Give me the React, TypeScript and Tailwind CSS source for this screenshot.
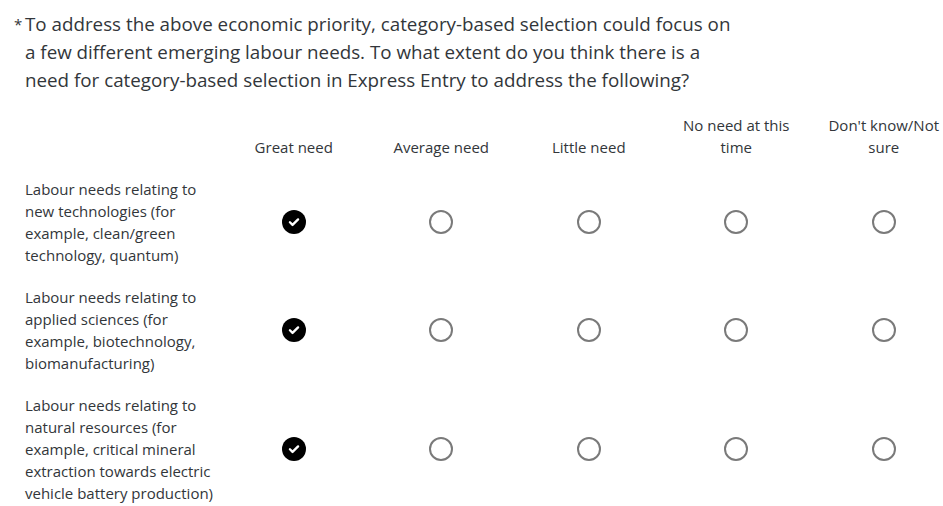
const COLUMNS = ['Great need', 'Average need', 'Little need', 'No need at this time', "Don't know/Not sure"]

const ROWS: { label: string; selected: number }[] = [
  { label: 'Labour needs relating to new technologies (for example, clean/green technology, quantum)', selected: 0 },
  { label: 'Labour needs relating to applied sciences (for example, biotechnology, biomanufacturing)', selected: 0 },
  { label: 'Labour needs relating to natural resources (for example, critical mineral extraction towards electric vehicle battery production)', selected: 0 },
]

function Radio({ checked }: { checked: boolean }) {
  if (checked) {
    return (
      <span className="w-6 h-6 rounded-full bg-black flex items-center justify-center">
        <svg viewBox="0 0 24 24" className="w-3.5 h-3.5" fill="none" stroke="white" strokeWidth={4} strokeLinecap="round" strokeLinejoin="round">
          <path d="M5 12.5l4.5 4.5L19 7.5" />
        </svg>
      </span>
    )
  }
  return <span className="w-6 h-6 rounded-full border-2 border-[#7a7a7a] bg-white" />
}

export default function App() {
  return (
    <div className="w-[943px] h-[506px] overflow-hidden bg-white text-[#32363a] font-['Open_Sans','Noto_Sans',sans-serif]">
      <div className="pt-[10px] pl-[14px] pr-4 flex">
        <span className="w-[11px] shrink-0 text-[15px] leading-[28px]">*</span>
        <p className="text-[18.8px] leading-[28px] w-[712px]">
          To address the above economic priority, category-based selection could focus on a few different emerging labour needs. To what extent do you think there is a need for category-based selection in Express Entry to address the following?
        </p>
      </div>

      <div className="w-[960px] mt-[20px] grid grid-cols-[220px_repeat(5,147.5px)] text-[15px] leading-[22px]">
        <div />
        {COLUMNS.map(c => (
          <div key={c} className="px-3 pb-[10px] flex items-end justify-center text-center">
            {c}
          </div>
        ))}

        {ROWS.map((row, i) => (
          <div key={i} className="contents">
            <div className="pl-[25px] py-[10px]">{row.label}</div>
            {COLUMNS.map((c, j) => (
              <div key={c} className="flex items-center justify-center">
                <Radio checked={row.selected === j} />
              </div>
            ))}
          </div>
        ))}
      </div>
    </div>
  )
}
